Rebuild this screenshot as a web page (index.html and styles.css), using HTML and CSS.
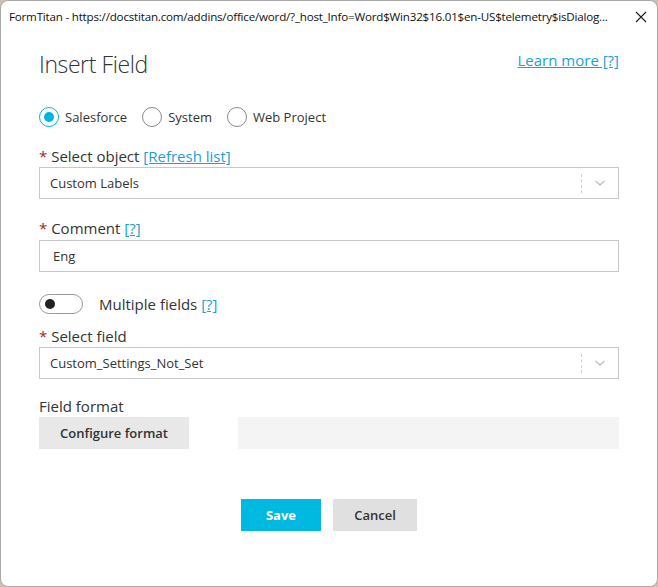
FILE: index.html
```html
<!DOCTYPE html>
<html lang="en">
<head>
<meta charset="utf-8">
<title>Insert Field</title>
<link rel="stylesheet" href="styles.css">
</head>
<body>
<div class="window">
  <div class="titlebar">
    <span class="title">FormTitan - https://docstitan.com/addins/office/word/?_host_Info=Word$Win32$16.01$en-US$telemetry$isDialog...</span>
    <svg class="close" width="12" height="12" viewBox="0 0 12 12"><path d="M1 1 L11 11 M11 1 L1 11" stroke="#1a1a1a" stroke-width="1.1" fill="none"/></svg>
  </div>
  <div class="content">
    <div class="header">
      <h1 class="heading">Insert Field</h1>
      <a class="link learn" href="#">Learn more [?]</a>
    </div>

    <div class="radios">
      <label class="radio"><span class="circle checked"><span class="dot"></span></span><span>Salesforce</span></label>
      <label class="radio"><span class="circle"></span><span>System</span></label>
      <label class="radio"><span class="circle"></span><span>Web Project</span></label>
    </div>

    <div class="field f-object">
      <div class="label"><span class="req">*</span> Select object <a class="link" href="#">[Refresh list]</a></div>
      <div class="select">
        <span class="value">Custom Labels</span>
        <span class="sep"></span>
        <svg class="chev" width="10" height="6" viewBox="0 0 10 6"><path d="M0.5 0.8 L5 5 L9.5 0.8" stroke="#b4b4b4" stroke-width="1.1" fill="none"/></svg>
      </div>
    </div>

    <div class="field f-comment">
      <div class="label"><span class="req">*</span> Comment <a class="link" href="#">[?]</a></div>
      <div class="input">Eng</div>
    </div>

    <div class="toggle-row">
      <span class="toggle"><span class="knob"></span></span>
      <span class="toggle-label">Multiple fields <a class="link" href="#">[?]</a></span>
    </div>

    <div class="field f-field">
      <div class="label"><span class="req">*</span> Select field</div>
      <div class="select">
        <span class="value">Custom_Settings_Not_Set</span>
        <span class="sep"></span>
        <svg class="chev" width="10" height="6" viewBox="0 0 10 6"><path d="M0.5 0.8 L5 5 L9.5 0.8" stroke="#b4b4b4" stroke-width="1.1" fill="none"/></svg>
      </div>
    </div>

    <div class="field f-format">
      <div class="label">Field format</div>
      <div class="format-row">
        <button class="btn-config">Configure format</button>
        <div class="format-box"></div>
      </div>
    </div>

    <div class="actions">
      <button class="btn btn-save">Save</button>
      <button class="btn btn-cancel">Cancel</button>
    </div>
  </div>
</div>
</body>
</html>
```

FILE: styles.css
```css
html, body {
  margin: 0;
  padding: 0;
  background: #cbbfb3;
}
body {
  font-family: "Open Sans", "Noto Sans", sans-serif;
  color: #333;
}
.window {
  width: 658px;
  height: 587px;
  box-sizing: border-box;
  background: #fff;
  border: 1px solid #a9a9a9;
  border-radius: 8px;
  overflow: hidden;
}
.titlebar {
  height: 31px;
  display: flex;
  align-items: center;
  padding: 0 0 0 8px;
}
.title {
  font-size: 11.6px;
  color: #111;
  white-space: nowrap;
  letter-spacing: -0.2px;
}
.close {
  margin-left: auto;
  margin-right: 10px;
}
.content {
  padding: 0 38px 0 38px;
}
.header {
  display: flex;
  justify-content: space-between;
  align-items: flex-start;
  margin-top: 15px;
}
.heading {
  margin: 0;
  font-weight: 300;
  font-size: 23px;
  line-height: 34px;
  letter-spacing: -0.4px;
  color: #333;
}
.link {
  color: #1b9fd4;
  text-decoration: underline;
}
.learn {
  font-size: 15px;
  line-height: 20px;
  margin-top: 3px;
}
.radios {
  display: flex;
  gap: 15px;
  margin-top: 26px;
  font-size: 13px;
}
.radio {
  display: flex;
  align-items: center;
  gap: 6px;
}
.circle {
  width: 20px;
  height: 20px;
  border: 1px solid #888;
  border-radius: 50%;
  display: flex;
  align-items: center;
  justify-content: center;
  box-sizing: border-box;
}
.circle.checked {
  border: 1px solid #00b4e0;
}
.dot {
  width: 10px;
  height: 10px;
  border-radius: 50%;
  background: #00b4e0;
}
.label {
  font-size: 15px;
  line-height: 21px;
}
.req {
  color: #a4262c;
}
.select, .input {
  height: 32px;
  box-sizing: border-box;
  border: 1px solid #c8c8c8;
  display: flex;
  align-items: center;
  font-size: 13px;
  background: #fff;
}
.select .value {
  padding-left: 10px;
  flex: 1;
}
.sep {
  width: 0;
  height: 19px;
  border-left: 1px dashed #d0d0d0;
}
.chev {
  margin: 0 13px 0 13px;
}
.input {
  padding-left: 13px;
}
.f-object {
  margin-top: 19px;
}
.f-comment {
  margin-top: 19px;
}
.f-comment .label {
  margin-bottom: 1px;
}
.toggle-row {
  display: flex;
  align-items: center;
  margin-top: 22px;
  font-size: 15px;
}
.toggle {
  width: 44px;
  height: 20px;
  box-sizing: border-box;
  border: 1px solid #999;
  border-radius: 10px;
  display: flex;
  align-items: center;
  padding-left: 5px;
}
.knob {
  width: 10px;
  height: 10px;
  border-radius: 50%;
  background: #222;
}
.toggle-label {
  margin-left: 16px;
}
.f-field {
  margin-top: 12px;
}
.f-format {
  margin-top: 17px;
}
.format-row {
  display: flex;
  gap: 49px;
}
.btn-config {
  width: 150px;
  height: 32px;
  border: none;
  background: #e8e8e8;
  font-family: inherit;
  font-size: 13px;
  font-weight: 600;
  color: #333;
  padding: 0;
}
.format-box {
  flex: 1;
  height: 32px;
  background: #f4f4f4;
}
.actions {
  display: flex;
  justify-content: center;
  gap: 12px;
  margin-top: 50px;
}
.btn {
  height: 32px;
  border: none;
  font-family: inherit;
  font-size: 13px;
  padding: 0;
}
.btn-save {
  width: 80px;
  background: #00b9e1;
  color: #fff;
  font-weight: 700;
}
.btn-cancel {
  width: 84px;
  background: #e0e0e0;
  color: #333;
  font-weight: 600;
}
```
